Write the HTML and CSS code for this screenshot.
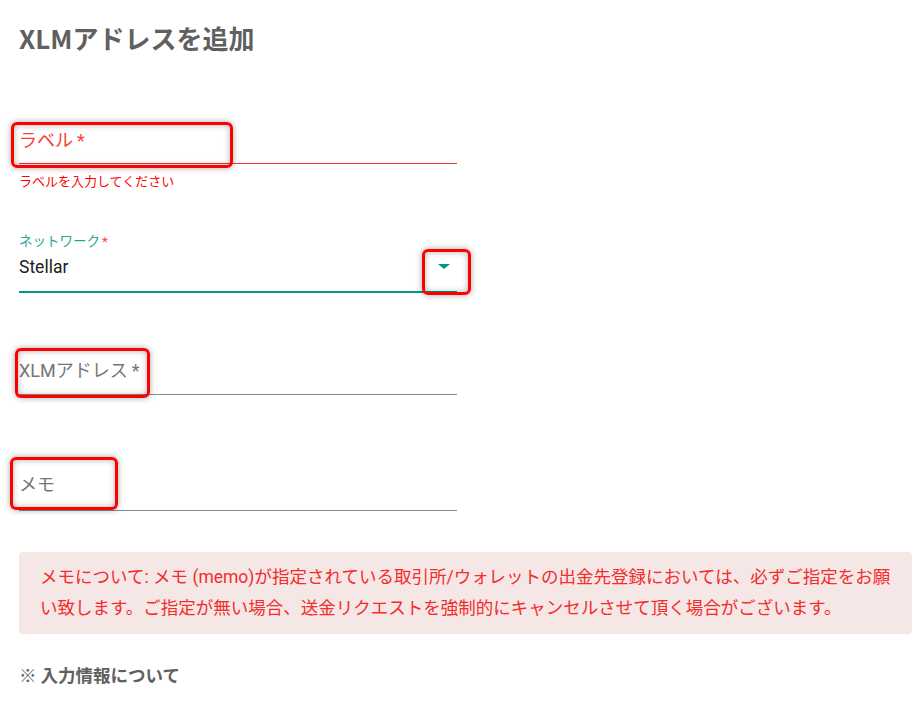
FILE: index.html
```html
<!DOCTYPE html>
<html lang="ja">
<head>
    <meta charset="UTF-8">
    <meta name="viewport" content="width=device-width, initial-scale=1.0">
    <title>XLMアドレスを追加</title>
    <link rel="stylesheet" href="styles.css">
</head>
<body>
    <div class="page">
        <h1 class="title">XLMアドレスを追加</h1>

        <div class="field field-error">
            <div class="field-input">
                <span class="placeholder">ラベル<span class="req">*</span></span>
            </div>
            <p class="hint">ラベルを入力してください</p>
        </div>

        <div class="field field-select">
            <label class="float-label">ネットワーク<span class="star">*</span></label>
            <div class="field-input">
                <span class="value">Stellar</span>
                <span class="caret"></span>
            </div>
        </div>

        <div class="field field-plain field-address">
            <div class="field-input">
                <span class="placeholder">XLMアドレス<span class="req">*</span></span>
            </div>
        </div>

        <div class="field field-plain field-memo">
            <div class="field-input">
                <span class="placeholder">メモ</span>
            </div>
        </div>

        <div class="notice">
            メモについて: メモ (memo)が指定されている取引所/ウォレットの出金先登録においては、必ずご指定をお願い致します。ご指定が無い場合、送金リクエストを強制的にキャンセルさせて頂く場合がございます。
        </div>

        <p class="note">※ 入力情報について</p>
    </div>

    <!-- 注釈の赤枠 -->
    <div class="mark mark-label"></div>
    <div class="mark mark-caret"></div>
    <div class="mark mark-address"></div>
    <div class="mark mark-memo"></div>
</body>
</html>
```

FILE: styles.css
```css
* {
    margin: 0;
    padding: 0;
    box-sizing: border-box;
}

body {
    font-family: Roboto, "Noto Sans CJK JP", sans-serif;
    background: #fff;
    color: #333;
}

.page {
    padding: 22px 1px 0 19px;
}

.title {
    font-family: "Noto Sans CJK JP", sans-serif;
    font-size: 26px;
    font-weight: 700;
    color: #606060;
    line-height: 32px;
}

.field {
    width: 438px;
}

.field-input {
    display: flex;
    align-items: flex-end;
    justify-content: space-between;
    height: 48px;
    border-bottom: 1px solid #8a8a8a;
}

.placeholder {
    font-size: 18px;
    line-height: 24px;
    color: #757575;
}

.req {
    margin-left: 4px;
}

/* ラベル (エラー) */
.field-error {
    margin-top: 62px;
}

.field-error .field-input {
    border-bottom-color: #e53935;
    padding-bottom: 10px;
}

.field-error .placeholder {
    color: #f44336;
}

.hint {
    margin-top: 10px;
    font-size: 13px;
    line-height: 16px;
    color: #f00;
}

/* ネットワーク */
.field-select {
    margin-top: 42px;
}

.float-label {
    display: block;
    font-size: 13.5px;
    line-height: 18px;
    color: #26a69a;
}

.star {
    color: #f44336;
    margin-left: 2px;
}

.field-select .field-input {
    height: 43px;
    border-bottom: 2px solid #009688;
    padding-bottom: 14px;
}

.value {
    font-size: 17.5px;
    line-height: 20px;
    color: #212121;
}

.caret {
    width: 0;
    height: 0;
    margin-right: 7px;
    margin-bottom: 8px;
    border-left: 6px solid transparent;
    border-right: 6px solid transparent;
    border-top: 5px solid #009688;
}

/* XLMアドレス / メモ */
.field-address {
    margin-top: 54px;
}

.field-address .field-input {
    padding-bottom: 11px;
}

.field-memo {
    margin-top: 68px;
}

.field-memo .field-input {
    padding-bottom: 13px;
}

.notice {
    margin-top: 41px;
    background: #f5e7e6;
    border-radius: 4px;
    padding: 10px 20px 10px 21px;
    font-size: 17.5px;
    line-height: 31px;
    color: #f42c2c;
}

.note {
    margin-top: 29px;
    font-family: "Noto Sans CJK JP", sans-serif;
    font-size: 17.5px;
    line-height: 24px;
    font-weight: 700;
    color: #606060;
}

/* 赤枠 */
.mark {
    position: absolute;
    border: 3px solid #f00;
    border-radius: 6px;
    box-shadow: 0 0 6px rgba(0, 0, 0, .35), inset 0 0 6px rgba(0, 0, 0, .3);
}

.mark-label {
    left: 11px;
    top: 122px;
    width: 222px;
    height: 46px;
}

.mark-caret {
    left: 422px;
    top: 249px;
    width: 49px;
    height: 46px;
}

.mark-address {
    left: 15px;
    top: 348px;
    width: 135px;
    height: 50px;
}

.mark-memo {
    left: 10px;
    top: 457px;
    width: 108px;
    height: 53px;
}
```
